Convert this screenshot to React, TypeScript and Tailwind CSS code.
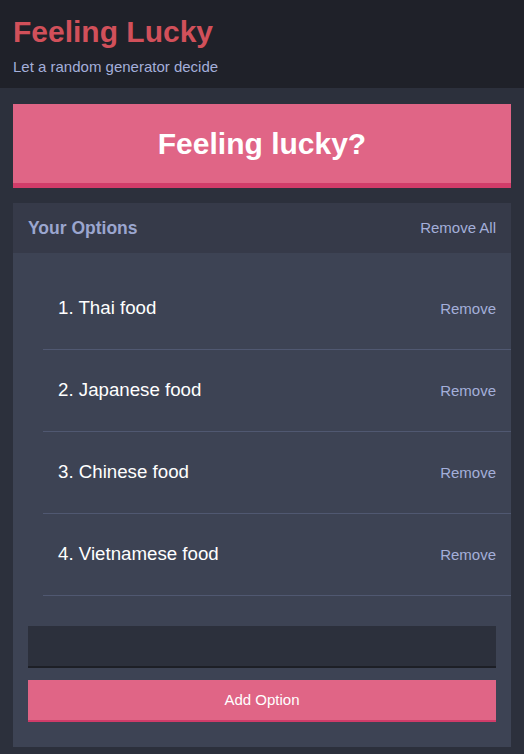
import React from 'react'

const options = ['Thai food', 'Japanese food', 'Chinese food', 'Vietnamese food']

export default function App() {
  return (
    <div className="min-h-[754px] bg-[#2c303c] font-['Liberation_Sans',Arial,sans-serif]">
      <header className="bg-[#1f2129] h-[88px] px-[13px] pt-[14px]">
        <h1 className="text-[30px] font-bold leading-[36px] text-[#d1505a]">Feeling Lucky</h1>
        <p className="text-[15px] leading-[18px] mt-[8px] text-[#a4afda]">Let a random generator decide</p>
      </header>

      <main className="px-[13px] pt-[16px] pb-[7px]">
        <button className="w-full h-[84px] bg-[#e06586] border-b-[5px] border-[#d13c69] text-white text-[30px] font-bold">
          Feeling lucky?
        </button>

        <section className="mt-[15px] bg-[#3d4354]">
          <div className="h-[50px] bg-[#363a49] flex items-center justify-between pl-[15px] pr-[15px]">
            <h3 className="text-[17.5px] font-bold text-[#9ba6cf]">Your Options</h3>
            <button className="text-[15px] text-[#a4afda]">Remove All</button>
          </div>

          <ul className="pt-[15px]">
            {options.map((o, i) => (
              <li
                key={o}
                className="ml-[30px] h-[82px] border-b border-[#505871] flex items-center justify-between pl-[15px] pr-[15px]"
              >
                <span className="text-[18.7px] text-white">
                  {i + 1}. {o}
                </span>
                <button className="text-[15px] text-[#a4afda] pt-[2px]">Remove</button>
              </li>
            ))}
          </ul>

          <form className="px-[15px] pt-[30px] pb-[25px] flex flex-col gap-[12px]">
            <input className="h-[42px] bg-[#2c303c] border-b-2 border-[#1d1f26] outline-none text-white px-2" />
            <button type="button" className="h-[42px] bg-[#e06586] border-b-2 border-[#d13c69] text-white text-[15px]">
              Add Option
            </button>
          </form>
        </section>
      </main>
    </div>
  )
}
